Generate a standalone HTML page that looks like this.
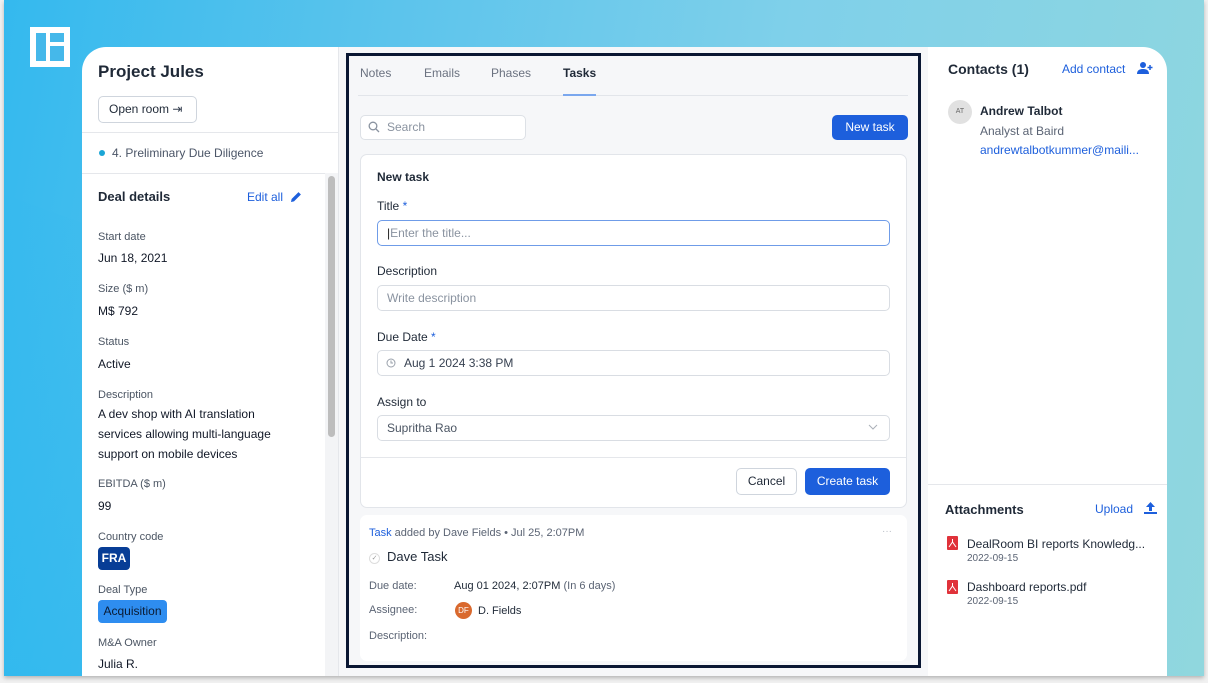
<!DOCTYPE html>
<html><head><meta charset="utf-8"><style>
*{box-sizing:border-box;margin:0;padding:0}
body{width:1208px;height:683px;background:#f1f1f1;font-family:"Liberation Sans",Arial,sans-serif;position:relative;overflow:hidden;color:#1f2937}
.bg{position:absolute;left:4px;top:0;width:1200px;height:676px;background:linear-gradient(100deg,#34b9ee 0%,#5cc4ec 30%,#7fd0ea 60%,#90d7de 100%);box-shadow:0 2px 4px rgba(0,0,0,.25);overflow:hidden}
.bg:before{content:"";position:absolute;left:-200px;top:250px;width:600px;height:600px;background:linear-gradient(160deg,rgba(40,185,240,.0),rgba(30,180,240,.6));transform:rotate(20deg)}
.a{position:absolute}
.card{position:absolute;left:82px;top:47px;width:1085px;height:629px;background:#fff;border-radius:24px 24px 0 0;overflow:hidden}
.t{position:absolute;white-space:nowrap}
.lbl{font-size:11px;color:#4b5563}
.val{font-size:12px;color:#111827}
.inp{position:absolute;left:377px;width:513px;height:26px;border:1px solid #d9dde3;border-radius:5px;background:#fff;font-size:12px;color:#6b7280;padding-left:9px;line-height:24px}
.blue{color:#1d5fdc}
</style></head><body>
<div class="bg"></div>
<div class="a" style="left:30px;top:27px;width:40px;height:40px;background:#fff"><div class="a" style="left:6px;top:6px;width:10px;height:28px;background:#45b8ea"></div><div class="a" style="left:20px;top:6px;width:14px;height:9px;background:#45b8ea"></div><div class="a" style="left:20px;top:19px;width:14px;height:15px;background:#45b8ea"></div></div>
<div class="card"></div>
<!-- left column -->
<div class="t" style="left:98px;top:62px;font-size:17px;font-weight:bold;color:#1f2937">Project Jules</div>
<div class="a" style="left:98px;top:96px;width:99px;height:27px;border:1px solid #cfd5dd;border-radius:5px;font-size:12px;line-height:25px;padding-left:10px;color:#1f2937">Open room <span style="color:#374151">⇥</span></div>
<div class="a" style="left:82px;top:132px;width:256px;height:1px;background:#e5e7eb"></div>
<div class="a" style="left:99px;top:150px;width:6px;height:6px;border-radius:50%;background:#1ba6d6"></div>
<div class="t" style="left:112px;top:146px;font-size:12px;color:#4b5567">4. Preliminary Due Diligence</div>
<div class="a" style="left:82px;top:173px;width:256px;height:1px;background:#e5e7eb"></div>
<div class="a" style="left:325px;top:173px;width:13px;height:503px;background:#f3f4f6"></div>
<div class="a" style="left:328px;top:176px;width:7px;height:261px;background:#bdbdbd;border-radius:4px"></div>
<div class="a" style="left:338px;top:47px;width:1px;height:629px;background:#e5e7eb"></div>
<div class="t" style="left:98px;top:189px;font-size:13px;font-weight:bold;color:#1f2937">Deal details</div>
<div class="t blue" style="left:247px;top:190px;font-size:12px">Edit all</div>
<svg class="a" style="left:290px;top:191px" width="12" height="12" viewBox="0 0 12 12"><path d="M1 11l.6-3L8.5 1.1l2.4 2.4L4 10.4z" fill="#1d5fdc"/></svg>
<div class="t lbl" style="left:98px;top:231px">Start date</div><div class="t val" style="left:98px;top:251px">Jun 18, 2021</div>
<div class="t lbl" style="left:98px;top:283px">Size ($ m)</div><div class="t val" style="left:98px;top:304px">M$ 792</div>
<div class="t lbl" style="left:98px;top:336px">Status</div><div class="t val" style="left:98px;top:357px">Active</div>
<div class="t lbl" style="left:98px;top:389px">Description</div>
<div class="a val" style="left:98px;top:404px;width:200px;line-height:20px">A dev shop with AI translation services allowing multi-language support on mobile devices</div>
<div class="t lbl" style="left:98px;top:478px">EBITDA ($ m)</div><div class="t val" style="left:98px;top:499px">99</div>
<div class="t lbl" style="left:98px;top:531px">Country code</div>
<div class="a" style="left:98px;top:547px;width:32px;height:23px;background:#073d96;border-radius:4px;color:#fff;font-size:12px;font-weight:bold;line-height:23px;text-align:center">FRA</div>
<div class="t lbl" style="left:98px;top:584px">Deal Type</div>
<div class="a" style="left:98px;top:600px;width:69px;height:23px;background:#2e8df0;border-radius:4px;color:#0b1b33;font-size:12px;line-height:23px;text-align:center">Acquisition</div>
<div class="t lbl" style="left:98px;top:637px">M&amp;A Owner</div><div class="t val" style="left:98px;top:657px">Julia R.</div>
<!-- middle -->
<div class="a" style="left:339px;top:47px;width:589px;height:629px;background:#f6f7f9"></div>
<div class="a" style="left:346px;top:53px;width:575px;height:615px;border:3px solid #0a1733"></div>
<div class="t" style="left:360px;top:66px;font-size:12px;color:#6b7280">Notes</div>
<div class="t" style="left:424px;top:66px;font-size:12px;color:#6b7280">Emails</div>
<div class="t" style="left:491px;top:66px;font-size:12px;color:#6b7280">Phases</div>
<div class="t" style="left:563px;top:66px;font-size:12px;font-weight:bold;color:#1f2937">Tasks</div>
<div class="a" style="left:358px;top:95px;width:550px;height:1px;background:#e2e5ea"></div>
<div class="a" style="left:563px;top:94px;width:33px;height:2px;background:#7aa7ee"></div>
<div class="a" style="left:360px;top:115px;width:166px;height:25px;background:#fff;border:1px solid #dde1e6;border-radius:5px;font-size:12px;color:#8a93a0;line-height:23px;padding-left:26px">Search</div>
<svg class="a" style="left:368px;top:121px" width="12" height="12" viewBox="0 0 12 12"><circle cx="5" cy="5" r="3.8" fill="none" stroke="#8a93a0" stroke-width="1.3"/><path d="M8 8l3 3" stroke="#8a93a0" stroke-width="1.3"/></svg>
<div class="a" style="left:832px;top:115px;width:76px;height:25px;background:#1d5fdc;border-radius:5px;color:#fff;font-size:12px;line-height:25px;text-align:center">New task</div>
<div class="a" style="left:360px;top:154px;width:547px;height:354px;background:#fff;border:1px solid #e2e5ea;border-radius:7px"></div>
<div class="a" style="left:361px;top:457px;width:545px;height:1px;background:#e5e7eb"></div>
<div class="t" style="left:377px;top:170px;font-size:12px;font-weight:bold;color:#1f2937">New task</div>
<div class="t" style="left:377px;top:199px;font-size:12px;color:#1f2937">Title <span class="blue">*</span></div>
<div class="inp" style="top:220px;border-color:#6f9ce8;color:#8a93a0"><span style="color:#222">|</span>Enter the title...</div>
<div class="t" style="left:377px;top:264px;font-size:12px;color:#1f2937">Description</div>
<div class="inp" style="top:285px;color:#8a93a0">Write description</div>
<div class="t" style="left:377px;top:330px;font-size:12px;color:#1f2937">Due Date <span class="blue">*</span></div>
<div class="inp" style="top:350px;padding-left:26px;color:#374151">Aug 1 2024 3:38 PM</div>
<svg class="a" style="left:386px;top:358px" width="10" height="10" viewBox="0 0 10 10"><circle cx="5" cy="5" r="4" fill="none" stroke="#9aa1ab"/><path d="M5 2.5V5h2" fill="none" stroke="#9aa1ab"/></svg>
<div class="t" style="left:377px;top:395px;font-size:12px;color:#1f2937">Assign to</div>
<div class="inp" style="top:415px;color:#4b5563">Supritha Rao</div>
<svg class="a" style="left:868px;top:424px" width="10" height="7" viewBox="0 0 10 7"><path d="M1 1l4 4 4-4" fill="none" stroke="#aab0b8"/></svg>
<div class="a" style="left:736px;top:468px;width:61px;height:27px;border:1px solid #cfd5dd;border-radius:5px;font-size:12px;line-height:25px;text-align:center;background:#fff">Cancel</div>
<div class="a" style="left:805px;top:468px;width:85px;height:27px;background:#1d5fdc;border-radius:5px;color:#fff;font-size:12px;line-height:27px;text-align:center">Create task</div>
<div class="a" style="left:360px;top:515px;width:547px;height:146px;background:#fff;border-radius:7px"></div>
<div class="t" style="left:369px;top:527px;font-size:11px;color:#5b6474"><span class="blue">Task</span> added by Dave Fields • Jul 25, 2:07PM</div>
<div class="t" style="left:882px;top:526px;font-size:10px;color:#b9bec6">···</div>
<div class="a" style="left:369px;top:553px;width:11px;height:11px;border:1px solid #ddd;border-radius:50%;font-size:7px;color:#999;text-align:center;line-height:10px">✓</div>
<div class="t" style="left:387px;top:549px;font-size:13px;color:#1f2937">Dave Task</div>
<div class="t" style="left:369px;top:580px;font-size:11px;color:#5b6474">Due date:</div>
<div class="t" style="left:454px;top:580px;font-size:11px;color:#1f2937">Aug 01 2024, 2:07PM <span style="color:#5b6474">(In 6 days)</span></div>
<div class="t" style="left:369px;top:604px;font-size:11px;color:#5b6474">Assignee:</div>
<div class="a" style="left:455px;top:602px;width:17px;height:17px;border-radius:50%;background:#d9692e;color:#fff;font-size:8px;line-height:17px;text-align:center">DF</div>
<div class="t" style="left:478px;top:605px;font-size:11px;color:#1f2937">D. Fields</div>
<div class="t" style="left:369px;top:630px;font-size:11px;color:#5b6474">Description:</div>
<!-- right -->
<div class="t" style="left:948px;top:61px;font-size:14px;font-weight:bold;color:#1f2937">Contacts (1)</div>
<div class="t blue" style="left:1062px;top:62px;font-size:12px">Add contact</div>
<svg class="a" style="left:1137px;top:62px" width="16" height="12" viewBox="0 0 16 12"><circle cx="6" cy="3" r="3" fill="#1d5fdc"/><path d="M0 12c0-4 3-5 6-5s6 1 6 5z" fill="#1d5fdc"/><path d="M13 3v5M10.5 5.5h5" stroke="#1d5fdc" stroke-width="1.5"/></svg>
<div class="a" style="left:948px;top:100px;width:24px;height:24px;border-radius:50%;background:#e1e1e1;font-size:7px;color:#666;text-align:center;line-height:24px">AT</div>
<div class="t" style="left:980px;top:104px;font-size:12px;font-weight:bold;color:#1f2937">Andrew Talbot</div>
<div class="t" style="left:980px;top:124px;font-size:12px;color:#5b6474">Analyst at Baird</div>
<div class="t blue" style="left:980px;top:143px;font-size:12px">andrewtalbotkummer@maili...</div>
<div class="a" style="left:928px;top:484px;width:239px;height:1px;background:#e5e7eb"></div>
<div class="t" style="left:945px;top:502px;font-size:13px;font-weight:bold;color:#1f2937">Attachments</div>
<div class="t blue" style="left:1095px;top:502px;font-size:12px">Upload</div>
<svg class="a" style="left:1144px;top:502px" width="13" height="12" viewBox="0 0 13 12"><path d="M6.5 0L2 5h3v4h3V5h3z" fill="#1d5fdc"/><rect x="0" y="10" width="13" height="2" fill="#1d5fdc"/></svg>
<svg class="a" style="left:947px;top:536px" width="11" height="14" viewBox="0 0 11 14"><rect width="11" height="14" rx="1" fill="#e0323a"/><path d="M2 11l3.5-5 3.5 5M5.5 6V3" stroke="#fff" stroke-width="1" fill="none"/></svg>
<div class="t" style="left:967px;top:537px;font-size:12px;color:#1f2937">DealRoom BI reports Knowledg...</div>
<div class="t" style="left:967px;top:553px;font-size:10px;color:#5b6474">2022-09-15</div>
<svg class="a" style="left:947px;top:580px" width="11" height="14" viewBox="0 0 11 14"><rect width="11" height="14" rx="1" fill="#e0323a"/><path d="M2 11l3.5-5 3.5 5M5.5 6V3" stroke="#fff" stroke-width="1" fill="none"/></svg>
<div class="t" style="left:967px;top:580px;font-size:12px;color:#1f2937">Dashboard reports.pdf</div>
<div class="t" style="left:967px;top:596px;font-size:10px;color:#5b6474">2022-09-15</div>
</body></html>
